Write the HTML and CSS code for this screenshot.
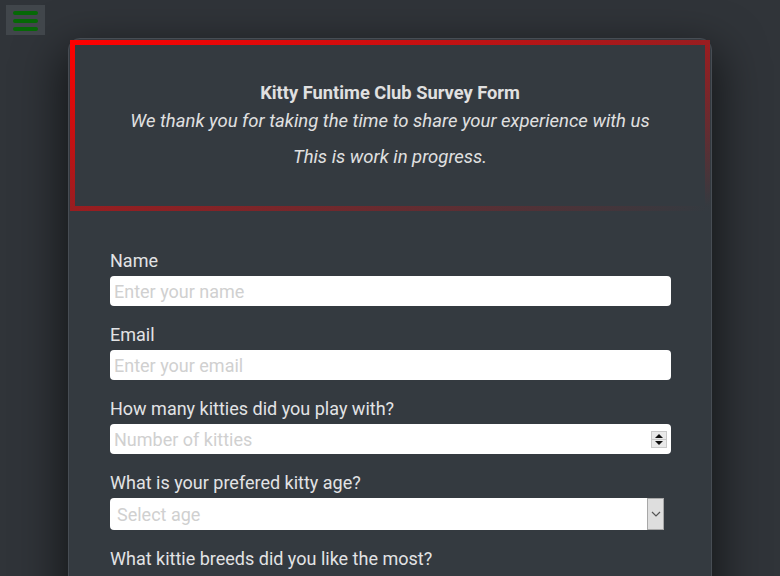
FILE: index.html
```html
<!DOCTYPE html>
<html lang="en">
<head>
<meta charset="utf-8">
<title>Kitty Funtime Club Survey Form</title>
<link rel="stylesheet" href="styles.css">
</head>
<body>
<button class="menu-btn" aria-label="Menu">
  <span class="bar"></span><span class="bar"></span><span class="bar"></span>
</button>
<main class="card">
  <header class="intro">
    <h1 class="title">Kitty Funtime Club Survey Form</h1>
    <p class="subtitle">We thank you for taking the time to share your experience with us</p>
    <p class="progress">This is work in progress.</p>
  </header>
  <form class="survey">
    <div class="group">
      <label class="label" for="name">Name</label>
      <input class="field" id="name" type="text" placeholder="Enter your name">
    </div>
    <div class="group">
      <label class="label" for="email">Email</label>
      <input class="field" id="email" type="email" placeholder="Enter your email">
    </div>
    <div class="group">
      <label class="label" for="number">How many kitties did you play with?</label>
      <div class="number-wrap">
        <input class="field" id="number" type="text" placeholder="Number of kitties">
        <span class="spinner"><span class="spin up"></span><span class="spin down"></span></span>
      </div>
    </div>
    <div class="group">
      <label class="label" for="age">What is your prefered kitty age?</label>
      <div class="select-wrap">
        <select class="select" id="age">
          <option>Select age</option>
        </select>
        <span class="select-btn"><svg width="10" height="6" viewBox="0 0 10 6"><path d="M1 1 L5 5 L9 1" fill="none" stroke="#555" stroke-width="1.2"/></svg></span>
      </div>
    </div>
    <div class="group">
      <label class="label">What kittie breeds did you like the most?</label>
    </div>
  </form>
</main>
</body>
</html>
```
FILE: styles.css
```css
html, body {
  margin: 0;
  padding: 0;
}
body {
  background: #303439;
  font-family: Roboto, "Liberation Sans", sans-serif;
  color: #e2e3e5;
  min-height: 576px;
  overflow: hidden;
  padding-top: 38px;
}
.menu-btn {
  position: absolute;
  left: 6px;
  top: 5px;
  width: 39px;
  height: 30px;
  padding: 6px 0 0 7px;
  margin: 0;
  border: 0;
  background: #41464b;
  display: flex;
  flex-direction: column;
  gap: 4px;
  box-sizing: border-box;
}
.bar {
  display: block;
  width: 25px;
  height: 4px;
  border-radius: 2px;
  background: #066806;
}
.card {
  width: 644px;
  margin: 0 0 0 68px;
  box-sizing: border-box;
  background: #343a40;
  border: 1px solid #474d54;
  border-radius: 12px;
  box-shadow: 0 18px 45px 8px rgba(0, 0, 0, 0.55);
  min-height: 600px;
  padding-top: 1px;
}
.intro {
  margin: 0 1px 0 1px;
  border: 5px solid;
  border-image: linear-gradient(to bottom right, #ff0000, rgba(52, 58, 64, 0.9)) 1;
  text-align: center;
  padding: 34px 10px 35px;
  height: 171px;
  box-sizing: border-box;
}
.title {
  margin: 0;
  font-size: 18.3px;
  font-weight: 700;
  line-height: 28px;
  color: #e0e0e0;
}
.subtitle, .progress {
  margin: 0;
  font-size: 18.5px;
  font-style: italic;
  line-height: 28px;
  color: #e0e0e0;
}
.progress {
  margin-top: 8px;
}
.survey {
  padding: 36px 40px 0 41px;
}
.group {
  margin-bottom: 15px;
}
.label {
  display: block;
  font-size: 18px;
  line-height: 27px;
  margin-bottom: 2px;
  color: #e2e3e5;
}
.field {
  display: block;
  width: 100%;
  height: 30px;
  box-sizing: border-box;
  border: 0;
  border-radius: 4px;
  background: #fff;
  padding: 0 4px;
  font-family: Roboto, "Liberation Sans", sans-serif;
  font-size: 18px;
  color: #333;
  outline: none;
}
.field::placeholder {
  color: #d0d0d0;
}
.number-wrap {
  position: relative;
}
.spinner {
  position: absolute;
  right: 4px;
  top: 7px;
  width: 14px;
  height: 15px;
  background: #e9e9e9;
  border: 1px solid #c9c9c9;
  display: flex;
  flex-direction: column;
}
.spin {
  flex: 1;
  position: relative;
}
.spin.up {
  border-bottom: 1px solid #c9c9c9;
}
.spin.up::after, .spin.down::after {
  content: "";
  position: absolute;
  left: 3px;
  border-left: 4px solid transparent;
  border-right: 4px solid transparent;
}
.spin.up::after {
  top: 2px;
  border-bottom: 4px solid #111;
}
.spin.down::after {
  top: 1px;
  border-top: 4px solid #111;
}
.select-wrap {
  position: relative;
  width: 554px;
  height: 32px;
}
.select {
  display: block;
  width: 100%;
  height: 32px;
  box-sizing: border-box;
  appearance: none;
  -webkit-appearance: none;
  border: 0;
  border-radius: 4px 0 0 4px;
  background: #fff;
  padding: 0 7px;
  font-family: Roboto, "Liberation Sans", sans-serif;
  font-size: 18px;
  color: #d0d0d0;
  outline: none;
}
.select-btn {
  position: absolute;
  right: 0;
  top: 0;
  width: 17px;
  height: 32px;
  box-sizing: border-box;
  background: #dedede;
  border: 1px solid #a8a8a8;
  display: flex;
  align-items: center;
  justify-content: center;
}
```
